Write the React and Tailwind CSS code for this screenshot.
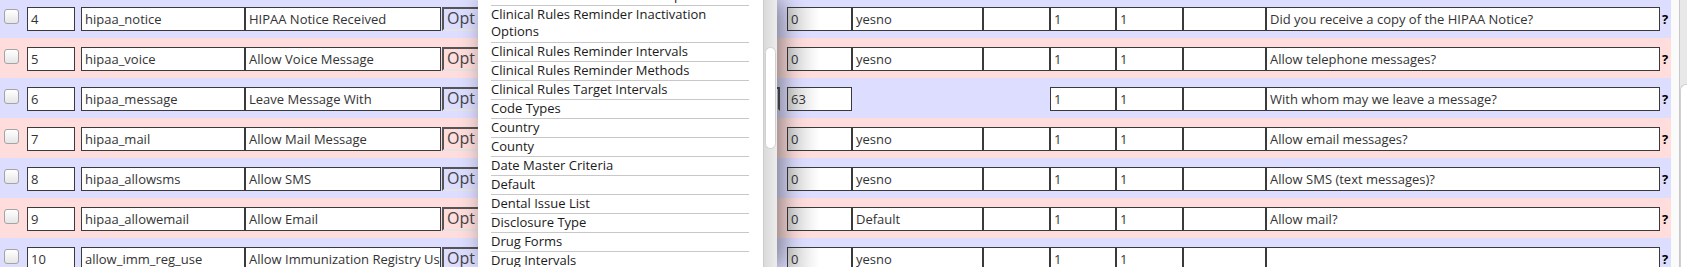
const rows = [
  { id: '4', name: 'hipaa_notice', title: 'HIPAA Notice Received', seq: '0', type: 'yesno', desc: 'Did you receive a copy of the HIPAA Notice?' },
  { id: '5', name: 'hipaa_voice', title: 'Allow Voice Message', seq: '0', type: 'yesno', desc: 'Allow telephone messages?' },
  { id: '6', name: 'hipaa_message', title: 'Leave Message With', seq: '63', type: null, desc: 'With whom may we leave a message?', wide: true },
  { id: '7', name: 'hipaa_mail', title: 'Allow Mail Message', seq: '0', type: 'yesno', desc: 'Allow email messages?' },
  { id: '8', name: 'hipaa_allowsms', title: 'Allow SMS', seq: '0', type: 'yesno', desc: 'Allow SMS (text messages)?' },
  { id: '9', name: 'hipaa_allowemail', title: 'Allow Email', seq: '0', type: 'Default', desc: 'Allow mail?' },
  { id: '10', name: 'allow_imm_reg_use', title: 'Allow Immunization Registry Use', seq: '0', type: 'yesno', desc: '' },
]

const options = [
  'Clinical Rules Reminder Due Options',
  'Clinical Rules Reminder Inactivation Options',
  'Clinical Rules Reminder Intervals',
  'Clinical Rules Reminder Methods',
  'Clinical Rules Target Intervals',
  'Code Types',
  'Country',
  'County',
  'Date Master Criteria',
  'Default',
  'Dental Issue List',
  'Disclosure Type',
  'Drug Forms',
  'Drug Intervals',
]

function Field({ value, w, grad }) {
  return (
    <div
      className={`${w} h-[24px] shrink-0 border border-[#3a3a3a] px-[3px] leading-[22px] text-[13px] text-[#333] whitespace-nowrap overflow-hidden ${
        grad ? 'bg-gradient-to-r from-[#d6d6d6] via-white to-white' : 'bg-white'
      }`}
    >
      {value}
    </div>
  )
}

function Row({ row, index }) {
  const bg = index % 2 === 0 ? 'bg-[#ddddff]' : 'bg-[#ffdddd]'
  return (
    <div className={`flex items-start h-[40px] w-[1671px] pt-[9px] ${bg}`}>
      <div className="ml-[4px] mt-[2px] w-[15px] h-[15px] shrink-0 rounded-[3px] border border-[#a4a4a4] bg-gradient-to-b from-white to-[#e6e6e6]" />
      <div className="ml-[8px]"><Field value={row.id} w="w-[48px]" /></div>
      <div className="ml-[6px]"><Field value={row.name} w="w-[164px]" /></div>
      <Field value={row.title} w="w-[196px]" />
      <div className="ml-[1px] w-[345px] shrink-0">
        <div
          className={`${row.wide ? 'w-[338px]' : 'w-[300px]'} h-[24px] border-2 border-t-[#555] border-l-[#555] border-r-[#555] border-b-[#e4e4e4] pl-[3px] leading-[19px] text-[16px] text-[#444]`}
        >
          Opt
        </div>
      </div>
      <Field value={row.seq} w="w-[65px]" grad />
      {row.type ? (
        <>
          <Field value={row.type} w="w-[131px]" />
          <Field value="" w="w-[67px]" />
        </>
      ) : (
        <div className="w-[198px] shrink-0" />
      )}
      <Field value="1" w="w-[66px]" />
      <Field value="1" w="w-[67px]" />
      <Field value="" w="w-[83px]" />
      <Field value={row.desc} w="w-[394px]" />
      <span className="ml-[2px] leading-[24px] text-[13px] font-bold text-black">?</span>
    </div>
  )
}

export default function App() {
  return (
    <div className="relative w-[1687px] h-[267px] overflow-hidden bg-white" style={{ fontFamily: '"Open Sans", "Noto Sans", sans-serif' }}>
      <div className="flex">
        <div className="mt-[-2px]">
          {rows.map((row, i) => (
            <Row key={row.id} row={row} index={i} />
          ))}
        </div>
        <div className="flex w-[16px] h-[267px]">
          <div className="w-[8px] bg-[#fafafa]" />
          <div className="w-[8px] border-l border-[#c8c8c8] bg-[#e8e8e8]">
            <div className="mt-[84px] h-[200px] rounded-tl-[6px] border-t border-l border-[#cfcfcf] bg-white" />
          </div>
        </div>
      </div>

      <div className="absolute left-[478px] top-0 w-[299px] h-[267px] flex bg-white shadow-[6px_0_22px_rgba(0,0,0,0.45)]">
        <div className="w-[271px] pl-[13px] overflow-hidden">
          <div className="mt-[-13px] w-[258px]">
            {options.map((o, i) => (
              <div
                key={o}
                className={`border-b border-[#c8c8c8] pb-[2px] text-[13px] text-[#1a1a1a] ${
                  i === 1 ? 'leading-[17px]' : 'leading-[16px]'
                }`}
              >
                {o}
              </div>
            ))}
          </div>
        </div>
        <div className="ml-[14px] w-[14px] h-[267px] border-l border-[#cdcdcd] bg-gradient-to-r from-[#dadada] to-[#ececec]">
          <div className="mt-[47px] ml-[1px] w-[11px] h-[102px] rounded-[6px] border border-[#d0d0d0] bg-white" />
        </div>
      </div>
    </div>
  )
}
